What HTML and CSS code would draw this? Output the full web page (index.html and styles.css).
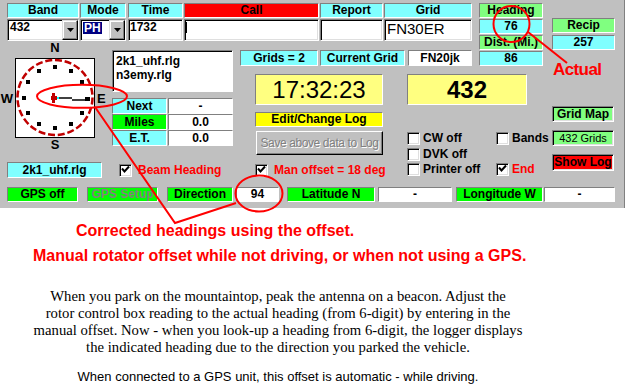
FILE: index.html
```html
<!DOCTYPE html>
<html>
<head>
<meta charset="utf-8">
<title>Rover Logger</title>
<link rel="stylesheet" href="styles.css">
</head>
<body>
<div class="panel">
  <div class="top">
    <div class="entry">
      <div class="row hdr-row">
        <div class="cell cyan c-band">Band</div>
        <div class="cell cyan c-mode">Mode</div>
        <div class="cell cyan c-time">Time</div>
        <div class="cell red c-call">Call</div>
        <div class="cell cyan c-report">Report</div>
        <div class="cell cyan c-grid">Grid</div>
      </div>
      <div class="row inp-row">
        <div class="field combo c-band"><span class="combo-val">432</span><span class="combo-btn"><svg width="7" height="4" viewBox="0 0 7 4"><path d="M0 0H7L3.5 4Z"/></svg></span></div>
        <div class="field combo c-mode"><span class="combo-val"><span class="sel">PH</span></span><span class="combo-btn"><svg width="7" height="4" viewBox="0 0 7 4"><path d="M0 0H7L3.5 4Z"/></svg></span></div>
        <div class="field c-time">1732</div>
        <div class="field c-call"><span class="caret"></span></div>
        <div class="field c-report"></div>
        <div class="field c-grid big">FN30ER</div>
      </div>
    </div>
    <div class="heading-grp">
      <div class="cell lgreen">Heading</div>
      <div class="cell cyan">76</div>
      <div class="cell lgreen">Dist. (Mi.)</div>
      <div class="cell cyan">86</div>
    </div>
    <div class="recip-grp">
      <div class="cell lgreen">Recip</div>
      <div class="cell cyan">257</div>
    </div>
  </div>

  <div class="mid">
    <div class="compass-col">
      <div class="cdir">N</div>
      <div class="compass-row">
        <span class="cside w">W</span>
        <svg class="compass" width="80" height="80" viewBox="0 0 80 80">
          <rect x="0.5" y="0.5" width="79" height="79" fill="#fff" stroke="#000"/>
          <circle cx="40" cy="39.5" r="37.5" fill="none" stroke="#c00000" stroke-width="2.5" stroke-dasharray="7 2.8"/>
          <g fill="#000">
            <rect x="38" y="7" width="4" height="4"/>
            <rect x="54" y="11" width="4" height="4"/>
            <rect x="65" y="22" width="4" height="4"/>
            <rect x="65" y="53" width="4" height="4"/>
            <rect x="54" y="64" width="4" height="4"/>
            <rect x="38" y="68" width="4" height="4"/>
            <rect x="22" y="64" width="4" height="4"/>
            <rect x="11" y="53" width="4" height="4"/>
            <rect x="7" y="38" width="4" height="4"/>
            <rect x="11" y="22" width="4" height="4"/>
            <rect x="22" y="11" width="4" height="4"/>
          </g>
          <rect x="37" y="35" width="3" height="10" fill="#c00000"/>
          <rect x="36" y="38" width="6" height="4" fill="#c00000"/>
          <rect x="42" y="39" width="2" height="2" fill="#00ffff"/>
          <rect x="44" y="39" width="13" height="2" fill="#404040"/>
          <rect x="57" y="41" width="14" height="2" fill="#404040"/>
          <rect x="70" y="39" width="5" height="4" fill="#000"/>
        </svg>
        <span class="cside e">E</span>
      </div>
      <div class="cdir">S</div>
    </div>

    <div class="files-col">
      <div class="filelist">2k1_uhf.rlg<br>n3emy.rlg</div>
      <div class="trip">
        <div class="trip-row"><div class="cell cyan tl">Next</div><div class="cell white tv">-</div></div>
        <div class="trip-row"><div class="cell green tl">Miles</div><div class="cell white tv">0.0</div></div>
        <div class="trip-row"><div class="cell cyan tl">E.T.</div><div class="cell white tv">0.0</div></div>
      </div>
    </div>

    <div class="grids-row">
      <div class="cell cyan g1">Grids = 2</div>
      <div class="cell cyan g2">Current Grid</div>
      <div class="cell white g3">FN20jk</div>
    </div>

    <div class="clock-col">
      <div class="cell yellow clock">17:32:23</div>
      <div class="cell yellow2 edit">Edit/Change Log</div>
      <div class="save">Save above data to Log</div>
    </div>

    <div class="disp-col">
      <div class="cell yellow bigband">432</div>
      <div class="checks">
        <div class="chkrow"><span class="chk"></span>CW off</div>
        <div class="chkrow"><span class="chk"></span>Bands</div>
        <div class="chkrow"><span class="chk"></span>DVK off</div>
        <div></div>
        <div class="chkrow"><span class="chk"></span>Printer off</div>
        <div class="chkrow"><span class="chk"><svg width="11" height="11" viewBox="0 0 11 11"><path d="M2 3.5L4.5 6.5L9 1.5" fill="none" stroke="#000" stroke-width="2"/></svg></span><span class="redtxt">End</span></div>
      </div>
    </div>

    <div class="btn-col">
      <div class="cell lgreen sunk gridmap">Grid Map</div>
      <div class="cell lgreen sunk grids432">432 Grids</div>
      <div class="cell red sunk showlog">Show Log</div>
    </div>

    <div class="cell cyan logname">2k1_uhf.rlg</div>
    <div class="chkrow beam"><span class="chk"><svg width="11" height="11" viewBox="0 0 11 11"><path d="M2 3.5L4.5 6.5L9 1.5" fill="none" stroke="#000" stroke-width="2"/></svg></span><span class="redtxt lbl">Beam Heading</span></div>
    <div class="chkrow manoff"><span class="chk"><svg width="11" height="11" viewBox="0 0 11 11"><path d="M2 3.5L4.5 6.5L9 1.5" fill="none" stroke="#000" stroke-width="2"/></svg></span><span class="redtxt lbl">Man offset = 18 deg</span></div>
  </div>

  <div class="row gps-row">
    <div class="cell green gp1">GPS off</div>
    <div class="cell green gp2">GPS Setup</div>
    <div class="cell green gp3">Direction</div>
    <div class="cell white gp4">94</div>
    <div class="cell green gp5">Latitude N</div>
    <div class="cell white gp6">-</div>
    <div class="cell green gp7">Longitude W</div>
    <div class="cell white gp8">-</div>
  </div>
</div>

<div class="notes">
  <p class="red-note n1">Corrected headings using the offset.</p>
  <p class="red-note n2">Manual rotator offset while not driving, or when not using a GPS.</p>
  <p class="para">When you park on the mountaintop, peak the antenna on a beacon. Adjust the<br>rotor control box reading to the actual heading (from 6-digit) by entering in the<br>manual offset. Now - when you look-up a heading from 6-digit, the logger displays<br>the indicated heading due to the direction you parked the vehicle.</p>
  <p class="para2">When connected to a GPS unit, this offset is automatic - while driving.</p>
</div>

<svg class="overlay" width="627" height="386" viewBox="0 0 627 386">
  <g fill="none" stroke="#ff0000" stroke-width="2">
    <circle cx="511.5" cy="24" r="18"/>
    <line x1="528" y1="32" x2="567" y2="63"/>
    <ellipse cx="82" cy="96.3" rx="45" ry="11.5"/>
    <polyline points="95,107 175,223 236,203"/>
    <ellipse cx="259" cy="193.5" rx="23.5" ry="18"/>
  </g>
</svg>
<div class="actual">Actual</div>
</body>
</html>
```

FILE: styles.css
```css
* { box-sizing: border-box; margin: 0; padding: 0; }
html, body { width: 627px; height: 386px; }
body {
  position: relative;
  overflow: hidden;
  background: #fff;
  color: #000;
  font-family: "Liberation Sans", Arial, sans-serif;
}

.panel {
  width: 625px;
  height: 208px;
  background: #c0c0c0;
  border-right: 1px solid #808080;
  padding-top: 3px;
}
.row { display: flex; }

/* ---------- top entry area ---------- */
.top { display: flex; align-items: flex-start; height: 38px; }
.entry { margin-left: 7px; }
.hdr-row { height: 15px; }
.inp-row { height: 22px; margin-top: 1px; }

.c-band { width: 72px; }
.c-mode { width: 46px; margin-left: 1px; }
.c-time { width: 55px; margin-left: 2px; }
.c-call { width: 135px; margin-left: 1px; }
.c-report { width: 63px; margin-left: 1px; }
.c-grid { width: 88px; margin-left: 1px; }

.cell {
  display: flex;
  align-items: center;
  justify-content: center;
  border: 1px solid;
  border-color: #808080 #fff #fff #808080;
  font-size: 12px;
  font-weight: bold;
  line-height: 13px;
  white-space: nowrap;
}
.cyan { background: #80ffff; }
.lgreen { background: #80ff80; }
.green { background: #00ff00; }
.red { background: #ff0000; }
.white { background: #fff; }
.yellow { background: #ffff80; }
.yellow2 { background: #ffff00; }

.field, .sunk {
  border: 1px solid;
  border-color: #808080 #fff #fff #808080;
  box-shadow: inset 1px 1px 0 #000, inset -1px -1px 0 #dfdfdf;
}
.field {
  background: #fff;
  display: flex;
  align-items: flex-start;
  font-size: 12px;
  font-weight: bold;
  line-height: 14px;
  padding-left: 2px;
}
.c-time.field { padding-left: 1px; }
.field.big { font-size: 15px; font-weight: normal; line-height: 17px; }
.combo { padding-left: 0; }
.combo-val { flex: 1; padding-left: 2px; }
.sel {
  display: inline-block;
  margin-top: 2px;
  padding: 0 1px;
  background: #000080;
  color: #fff;
  line-height: 12px;
}
.combo-btn {
  width: 16px;
  height: 100%;
  background: #c0c0c0;
  border: 1px solid;
  border-color: #dfdfdf #000 #000 #dfdfdf;
  box-shadow: inset -1px -1px 0 #808080, inset 1px 1px 0 #fff;
  display: flex;
  align-items: center;
  justify-content: center;
}
.combo-btn svg { display: block; }
.caret { width: 1px; height: 11px; background: #000; margin-top: 2px; margin-left: -1px; }

.heading-grp {
  margin-left: 7px;
  width: 64px;
  display: flex;
  flex-direction: column;
  gap: 1px;
}
.heading-grp .cell { height: 15px; }
.recip-grp {
  margin-left: 9px;
  margin-top: 15px;
  width: 63px;
  display: flex;
  flex-direction: column;
  gap: 2px;
}
.recip-grp .cell { height: 15px; }

/* ---------- middle grid ---------- */
.mid {
  display: grid;
  grid-template-columns: 108px 128px 164px 146px 78px;
  grid-template-rows: 29px 88px 22px;
}
.mid > * { align-self: start; justify-self: start; }

.compass-col { grid-column: 1; grid-row: 1 / 3; }
.cdir {
  width: 80px;
  margin-left: 15px;
  text-align: center;
  font-weight: bold;
  font-size: 13px;
  line-height: 13px;
}
.compass-row { display: flex; align-items: center; margin-top: 4px; }
.cside { font-weight: bold; font-size: 13px; line-height: 13px; }
.cside.w { width: 14px; text-align: center; margin-right: 1px; }
.cside.e { margin-left: 2px; }
.compass { display: block; }

.files-col { grid-column: 2; grid-row: 1 / 3; padding-left: 4px; }
.filelist {
  margin-top: 9px;
  width: 121px;
  height: 42px;
  background: #fff;
  border: 1px solid;
  border-color: #808080 #fff #fff #808080;
  box-shadow: inset 1px 1px 0 #000;
  font-size: 12px;
  font-weight: bold;
  line-height: 14px;
  padding: 3px 0 0 3px;
}
.trip { margin-top: 6px; width: 121px; }
.trip-row { display: flex; height: 16px; gap: 1px; }
.tl { width: 55px; }
.tv { width: 65px; }

.grids-row {
  grid-column: 3 / 5;
  grid-row: 1;
  display: flex;
  margin: 9px 0 0 4px;
  height: 16px;
}
.g1 { width: 78px; }
.g2 { width: 85px; margin-left: 2px; }
.g3 { width: 64px; margin-left: 3px; }

.clock-col { grid-column: 3; grid-row: 2; padding: 4px 0 0 19px; }
.clock { width: 128px; height: 31px; font-size: 24px; font-weight: normal; line-height: 26px; }
.edit { width: 128px; height: 15px; margin-top: 7px; }
.save {
  width: 127px;
  height: 24px;
  margin: 4px 0 0 1px;
  background: #c0c0c0;
  border: 1px solid;
  border-color: #fff #000 #000 #fff;
  box-shadow: inset -1px -1px 0 #808080;
  color: #808080;
  text-shadow: 1px 1px 0 #fff;
  font-size: 12px;
  letter-spacing: -0.4px;
  display: flex;
  align-items: center;
  justify-content: center;
  white-space: nowrap;
}

.disp-col { grid-column: 4; grid-row: 2 / 4; padding: 4px 0 0 7px; }
.bigband { width: 120px; height: 31px; font-size: 24px; line-height: 26px; }
.checks {
  display: grid;
  grid-template-columns: 89px auto;
  grid-template-rows: 16px 15px 15px;
  margin-top: 27px;
}
.chkrow {
  display: flex;
  align-items: center;
  height: 13px;
  font-size: 12px;
  font-weight: bold;
  line-height: 13px;
  white-space: nowrap;
}
.chk {
  width: 13px;
  height: 13px;
  flex: none;
  margin-right: 3px;
  background: #fff;
  border: 1px solid;
  border-color: #808080 #fff #fff #808080;
  box-shadow: inset 1px 1px 0 #000, inset -1px -1px 0 #dfdfdf;
}
.chk svg { display: block; }
.redtxt { color: #ff0000; }
.lbl { padding-left: 3px; }

.btn-col {
  grid-column: 5;
  grid-row: 2 / 4;
  padding: 36px 0 0 6px;
  display: flex;
  flex-direction: column;
}
.gridmap { width: 62px; height: 16px; }
.grids432 { width: 62px; height: 16px; margin-top: 8px; font-size: 11px; font-weight: normal; }
.showlog { width: 62px; height: 17px; margin-top: 8px; }

.logname { grid-column: 1; grid-row: 3; margin: 4px 0 0 7px; width: 95px; height: 16px; }
.beam { grid-column: 2; grid-row: 3; margin: 6px 0 0 11px; }
.manoff { grid-column: 3; grid-row: 3; margin: 6px 0 0 19px; }

/* ---------- GPS bar ---------- */
.gps-row { margin-top: 7px; height: 15px; }
.gp1 { width: 71px; margin-left: 7px; }
.gp2 { width: 71px; margin-left: 9px; color: #808080; }
.gp3 { width: 66px; margin-left: 9px; }
.gp4 { width: 43px; margin-left: 3px; }
.gp5 { width: 88px; margin-left: 8px; }
.gp6 { width: 74px; margin-left: 3px; }
.gp7 { width: 87px; margin-left: 4px; }
.gp8 { width: 71px; margin-left: 1px; }

/* ---------- notes ---------- */
.notes { padding-top: 13px; }
.red-note {
  color: #ff0000;
  font-weight: bold;
  font-size: 16px;
  line-height: 20px;
  white-space: nowrap;
}
.n1 { padding-left: 76px; }
.n2 { padding-left: 33px; margin-top: 5px; }
.para {
  font-family: "Liberation Serif", "Times New Roman", serif;
  font-size: 14.7px;
  line-height: 17px;
  text-align: center;
  width: 556px;
  margin-top: 22px;
  white-space: nowrap;
}
.para2 {
  font-size: 13px;
  line-height: 17px;
  text-align: center;
  width: 556px;
  margin-top: 12px;
  white-space: nowrap;
}

/* ---------- annotations ---------- */
.overlay { position: absolute; left: 0; top: 0; pointer-events: none; }
.actual {
  position: absolute;
  left: 553px;
  top: 61px;
  color: #ff0000;
  font-weight: bold;
  font-size: 17px;
  line-height: 17px;
  letter-spacing: -0.6px;
}
```
